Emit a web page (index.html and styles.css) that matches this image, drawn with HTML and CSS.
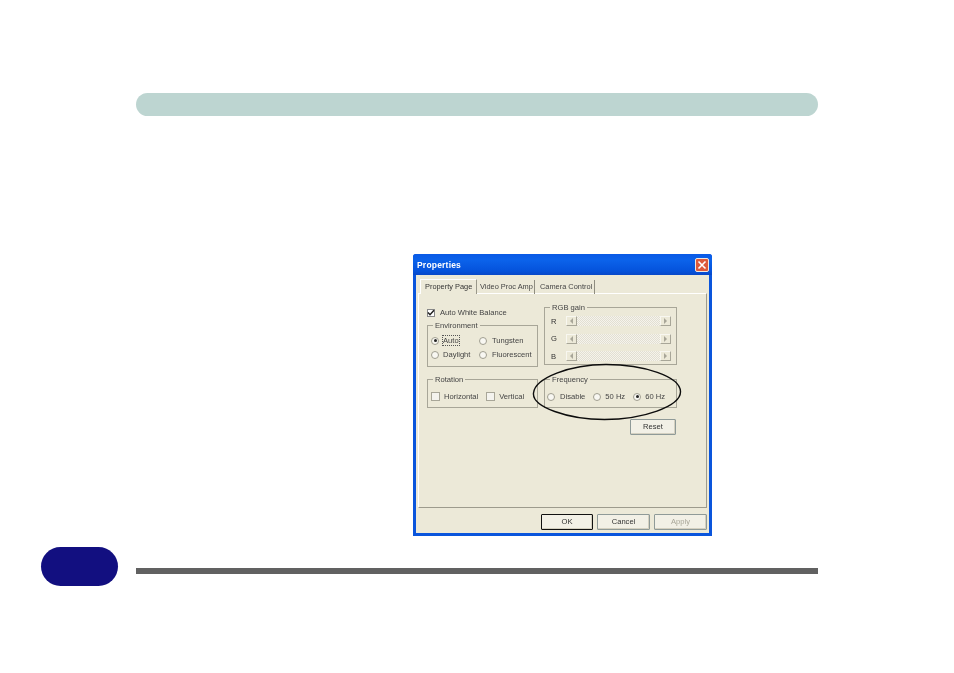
FILE: index.html
```html
<!DOCTYPE html>
<html lang="en">
<head>
<meta charset="utf-8">
<title>Properties</title>
<link rel="stylesheet" href="styles.css">
</head>
<body>
<div class="page">
  <div class="header-bar"></div>
  <div class="dialog">
    <div class="titlebar">
      <span class="title">Properties</span>
      <span class="close"><svg viewBox="0 0 14 14" width="14" height="14"><path d="M3.5 3.5l7 7M10.5 3.5l-7 7" stroke="#fff" stroke-width="1.6" fill="none"/></svg></span>
    </div>
    <div class="client">
      <div class="tabs">
        <span class="tab active">Property Page</span>
        <span class="tab tab-video">Video Proc Amp</span>
        <span class="tab tab-camera">Camera Control</span>
      </div>
      <div class="tabpage">
        <div class="col-top-left">
          <label class="check-row auto-white"><span class="check checked"><svg viewBox="0 0 8 8" width="8" height="8"><path d="M1 3.5l2 2.2L7 1.2" stroke="#222" stroke-width="1.5" fill="none"/></svg></span>Auto White Balance</label>
          <div class="group env">
            <span class="legend">Environment</span>
            <div class="radio-grid">
              <label class="opt"><span class="radio on"></span><span class="focus">Auto</span></label>
              <label class="opt"><span class="radio"></span>Tungsten</label>
              <label class="opt"><span class="radio"></span>Daylight</label>
              <label class="opt"><span class="radio"></span>Fluorescent</label>
            </div>
          </div>
        </div>
        <div class="group rgb">
          <span class="legend">RGB gain</span>
          <div class="slider"><span class="letter">R</span><span class="btn-arrow"><i class="tri left"></i></span><span class="track"></span><span class="btn-arrow"><i class="tri right"></i></span></div>
          <div class="slider"><span class="letter">G</span><span class="btn-arrow"><i class="tri left"></i></span><span class="track"></span><span class="btn-arrow"><i class="tri right"></i></span></div>
          <div class="slider"><span class="letter">B</span><span class="btn-arrow"><i class="tri left"></i></span><span class="track"></span><span class="btn-arrow"><i class="tri right"></i></span></div>
        </div>
        <div class="group rotation">
          <span class="legend">Rotation</span>
          <div class="row">
            <label class="check-row"><span class="check"></span>Horizontal</label>
            <label class="check-row"><span class="check"></span>Vertical</label>
          </div>
        </div>
        <div class="group frequency">
          <span class="legend">Frequency</span>
          <div class="row freq-row">
            <label class="opt"><span class="radio"></span>Disable</label>
            <label class="opt"><span class="radio"></span>50 Hz</label>
            <label class="opt"><span class="radio on"></span>60 Hz</label>
          </div>
        </div>
        <div class="reset-cell"><span class="button reset">Reset</span></div>
        <svg class="oval" viewBox="0 0 150 58" width="150" height="58"><path d="M1.5 30C3 15 38 1.5 74 1.5c38 0 74 12 74.500 27 .5 15-38 28-76 28C36 56.500 0 44 1.500 30z" fill="none" stroke="#0c0c0c" stroke-width="1.400"/></svg>
      </div>
      <div class="footer-buttons">
        <span class="button default">OK</span>
        <span class="button">Cancel</span>
        <span class="button disabled">Apply</span>
      </div>
    </div>
  </div>
  <div class="page-footer">
    <div class="pill"></div>
    <div class="rule"></div>
  </div>
</div>
</body>
</html>
```
FILE: styles.css
```css
* { box-sizing: border-box; }
html, body { margin: 0; padding: 0; background: #fff; }
body { font-family: "Liberation Sans", Arial, sans-serif; }
.page { width: 954px; height: 673px; padding-top: 93px; overflow: hidden; }
.header-bar { width: 682px; height: 23px; margin-left: 136px; border-radius: 12px; background: #bdd5d1; }

.dialog {
  width: 299px; height: 282px; margin: 138px 0 0 413px;
  display: flex; flex-direction: column;
  background: #0a55dc; border-radius: 3px 3px 0 0;
  font-size: 7.600px; color: #444; filter: blur(0.4px);
}
.titlebar {
  height: 21px; flex: none; display: flex; align-items: center; justify-content: space-between;
  padding: 0 3px 0 4px;
  background: linear-gradient(#0a5ae6, #0b62ea 30%, #0553dc 80%, #0848c8);
  border-radius: 3px 3px 0 0;
}
.title { font-size: 8.500px; font-weight: bold; color: #fff; letter-spacing: 0.200px; }
.close { width: 14px; height: 14px; display: block; background: #dd5a3c; border: 1px solid #f0e8e0; border-radius: 2px; }
.close svg { display: block; margin: -1px; }
.client { flex: 1; margin: 0 3px 3px 3px; background: #ece9d8; display: flex; flex-direction: column; padding: 4px 2px 0 2px; }

.tabs { display: flex; height: 15px; flex: none; padding-left: 2px; position: relative; z-index: 1; font-size: 7.400px; }
.tab { height: 14px; margin-top: 1px; padding: 2px 0 0 3px; border-right: 1px solid #8f8d80; white-space: nowrap; }
.tab.active { width: 57px; height: 15px; margin-top: 0; padding-left: 4px; background: #ece9d8; color: #333; border: 1px solid #fff; border-bottom: 0; border-right: 1px solid #9a988a; }
.tab-video { width: 58px; padding-left: 3px; }
.tab-camera { width: 60px; padding-left: 5px; }

.tabpage {
  height: 215px; flex: none; position: relative; margin-top: -1px;
  border: 1px solid #9d9b8d; border-top-color: #fff; border-left-color: #fff;
  display: grid; grid-template-columns: 111px 133px; grid-template-rows: 73px 29px 30px;
  column-gap: 6px; row-gap: 12px; padding: 0 0 0 8px; align-content: start;
}
.col-top-left { display: flex; flex-direction: column; }
.auto-white { height: 31px; padding-top: 6px; align-items: flex-start; }
.group { position: relative; border: 1px solid #a8a698; }
.legend { position: absolute; top: -5px; left: 5px; padding: 0 2px; background: #ece9d8; line-height: 9px; }
.env { height: 42px; }
.rgb { margin-top: 13px; height: 58px; padding-top: 8px; }
.rotation, .frequency { height: 29px; }

.check-row { display: flex; align-items: center; gap: 4px; white-space: nowrap; color: #444; }
.check { width: 9px; height: 9px; flex: none; background: #f4f3ee; border: 1px solid #a8a698; display: block; }
.check.checked { width: 8px; height: 8px; background: #fff; border-color: #888; margin-right: 1px; }
.check svg { display: block; margin: -1px; }

.radio-grid { display: grid; grid-template-columns: 48px 1fr; row-gap: 5px; padding: 10px 0 0 3px; }
.opt { display: flex; align-items: center; gap: 4px; white-space: nowrap; height: 9px; }
.radio-grid .opt:nth-child(even) { gap: 5px; }
.radio { width: 8px; height: 8px; flex: none; border-radius: 50%; border: 1px solid #a09e90; background: #f8f7f2; position: relative; display: block; }
.radio.on::after { content: ""; position: absolute; left: 1.500px; top: 1.500px; width: 3px; height: 3px; border-radius: 50%; background: #222; }
.focus { outline: 1px dotted #555; }

.row { display: flex; align-items: center; }
.rotation .row { gap: 8px; padding: 12px 0 0 3px; }
.freq-row { padding: 12px 0 0 2px; gap: 8px; }
.freq-row .opt:first-child { gap: 5px; }

.slider { display: flex; align-items: center; height: 10px; margin-bottom: 7.500px; }
.letter { width: 21px; padding-left: 6px; color: #333; }
.btn-arrow { width: 11px; height: 10px; flex: none; background: #ece9d8; border: 1px solid; border-color: #f8f7f0 #a8a698 #a8a698 #f8f7f0; display: flex; align-items: center; justify-content: center; }
.tri { display: block; width: 0; height: 0; border-top: 3px solid transparent; border-bottom: 3px solid transparent; }
.tri.left { border-right: 3px solid #a8a698; }
.tri.right { border-left: 3px solid #a8a698; }
.track { width: 83px; height: 10px; background-color: #f4f2ea; background-image: repeating-conic-gradient(#e2dfd2 0 25%, #f5f3ec 0 50%); background-size: 2px 2px; }

.reset-cell { grid-column: 2; display: flex; justify-content: flex-end; margin: -1px 1px 0 0; }
.button { height: 16px; width: 46px; padding-bottom: 2px; display: flex; align-items: center; justify-content: center; background: #f2f0e6; border: 1px solid #8f9a98; border-radius: 1px; color: #333; box-shadow: inset -1px -1px 0 #d4d0c0; }
.footer-buttons { flex: none; display: flex; justify-content: flex-end; gap: 4px; padding: 6px 0 0 0; }
.footer-buttons .button { width: 53px; }
.footer-buttons .default { width: 52px; border: 1px solid #111; }
.button.disabled { color: #a8a698; }
.oval { position: absolute; left: 113px; top: 69px; }

.page-footer { display: flex; align-items: flex-start; gap: 18px; margin-top: 11px; padding-left: 41px; }
.pill { width: 77px; height: 39px; border-radius: 20px; background: #120f80; }
.rule { width: 682px; height: 6px; margin-top: 21px; background: #616161; }
```
